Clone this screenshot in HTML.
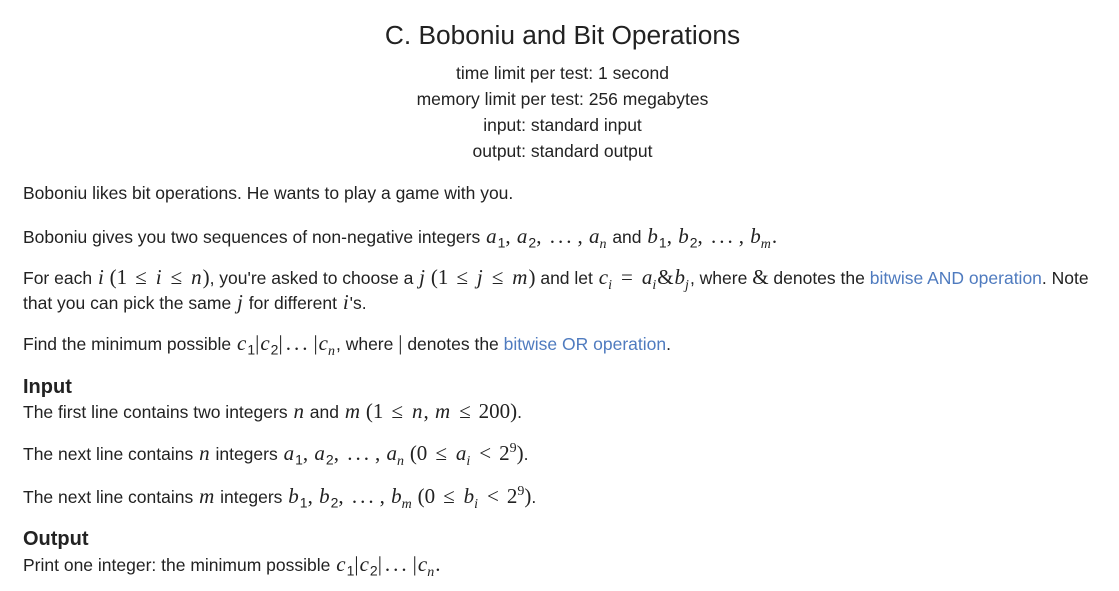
<!DOCTYPE html>
<html><head><meta charset="utf-8"><style>
body{margin:0;background:#fff;width:1119px;height:591px;overflow:hidden;font-family:"Liberation Sans",sans-serif;color:#222;font-size:17.5px;}
.l{position:absolute;left:23px;white-space:nowrap;line-height:20px;}
.c{position:absolute;left:0;width:1125px;text-align:center;white-space:nowrap;line-height:20px;}
m{font-family:"Liberation Serif",serif;font-style:italic;font-size:21px;padding:0 1px;}
r{font-family:"Liberation Serif",serif;font-size:21px;}
o{font-family:"Liberation Serif",serif;font-size:21px;margin:0 8px;}
d{font-family:"Liberation Serif",serif;font-size:21px;letter-spacing:3px;margin:0 3px;}
a{color:#4f7bbf;text-decoration:none;}
h{font-weight:bold;font-size:20px;position:absolute;left:23px;line-height:22px;}
sub,sup{font-size:14px;line-height:0;}
</style></head><body>
<div class="c" style="top:21px;font-size:26.3px;line-height:28px">C. Boboniu and Bit Operations</div>
<div class="c" style="top:63px">time limit per test: 1 second</div>
<div class="c" style="top:89px">memory limit per test: 256 megabytes</div>
<div class="c" style="top:115px">input: standard input</div>
<div class="c" style="top:141px">output: standard output</div>
<div class="l" style="top:183px">Boboniu likes bit operations. He wants to play a game with you.</div>
<div class="l" style="top:226px">Boboniu gives you two sequences of non-negative integers <m>a</m><sub>1</sub><r>, </r><m>a</m><sub>2</sub><r>, </r><d>...</d><r>, </r><m>a<sub>n</sub></m> and <m>b</m><sub>1</sub><r>, </r><m>b</m><sub>2</sub><r>, </r><d>...</d><r>, </r><m>b<sub>m</sub></m><r>.</r></div>
<div class="l" style="top:267px">For each <m>i</m> <r>(1</r><o>≤</o><m>i</m><o>≤</o><m>n</m><r>)</r>, you're asked to choose a <m>j</m> <r>(1</r><o>≤</o><m>j</m><o>≤</o><m>m</m><r>)</r> and let <m>c<sub>i</sub></m><o>=</o><m>a<sub>i</sub></m><r>&amp;</r><m>b<sub>j</sub></m>, where <r>&amp;</r> denotes the <a>bitwise AND operation</a>. Note</div>
<div class="l" style="top:292px">that you can pick the same <m>j</m> for different <m>i</m>'s.</div>
<div class="l" style="top:333px">Find the minimum possible <m>c</m><sub>1</sub><r>|</r><m>c</m><sub>2</sub><r>|</r><d>...</d><r>|</r><m>c<sub>n</sub></m>, where <r>|</r> denotes the <a>bitwise OR operation</a>.</div>
<h style="top:376px">Input</h>
<div class="l" style="top:401px">The first line contains two integers <m>n</m> and <m>m</m> <r>(1</r><o>≤</o><m>n</m><r>, </r><m>m</m><o>≤</o><r>200)</r>.</div>
<div class="l" style="top:443px">The next line contains <m>n</m> integers <m>a</m><sub>1</sub><r>, </r><m>a</m><sub>2</sub><r>, </r><d>...</d><r>, </r><m>a<sub>n</sub></m> <r>(0</r><o>≤</o><m>a<sub>i</sub></m><o>&lt;</o><r>2<sup>9</sup>)</r>.</div>
<div class="l" style="top:486px">The next line contains <m>m</m> integers <m>b</m><sub>1</sub><r>, </r><m>b</m><sub>2</sub><r>, </r><d>...</d><r>, </r><m>b<sub>m</sub></m> <r>(0</r><o>≤</o><m>b<sub>i</sub></m><o>&lt;</o><r>2<sup>9</sup>)</r>.</div>
<h style="top:528px">Output</h>
<div class="l" style="top:554px">Print one integer: the minimum possible <m>c</m><sub>1</sub><r>|</r><m>c</m><sub>2</sub><r>|</r><d>...</d><r>|</r><m>c<sub>n</sub></m><r>.</r></div>
</body></html>
